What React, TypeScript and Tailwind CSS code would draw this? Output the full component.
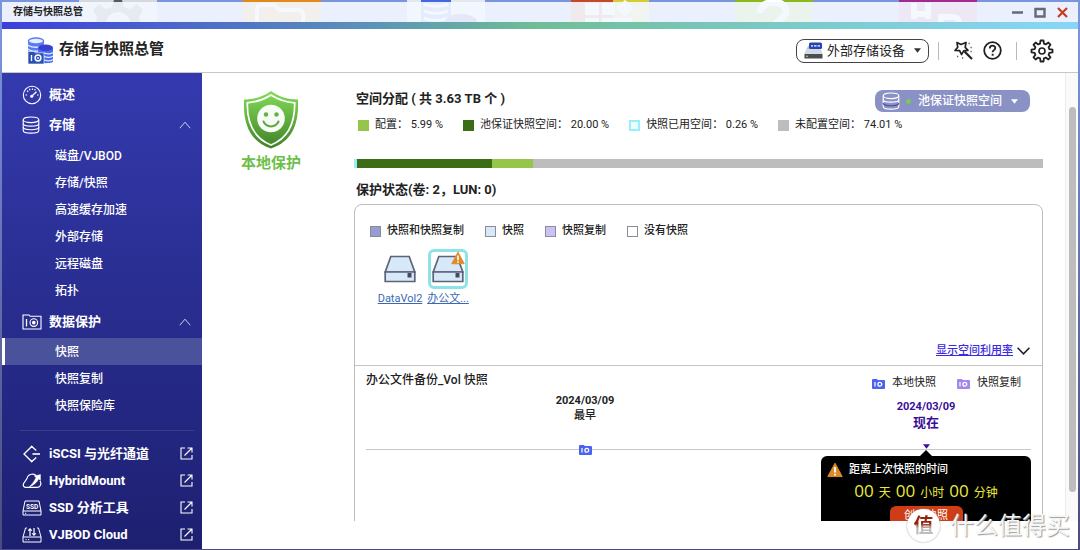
import type { ReactNode } from 'react';
import clsx from 'clsx';

const FONT = "font-[Roboto,'Noto_Sans_CJK_SC',sans-serif]";

const storageItems = ['磁盘/VJBOD', '存储/快照', '高速缓存加速', '外部存储', '远程磁盘', '拓扑'];
const protectionItems = ['快照', '快照复制', '快照保险库'];

const spaceLegend = [
    { label: '配置', value: '5.99 %', swatch: 'bg-[#95c54b]' },
    { label: '池保证快照空间', value: '20.00 %', swatch: 'bg-[#3b6e14]' },
    { label: '快照已用空间', value: '0.26 %', swatch: 'border-2 border-[#97effc] bg-[#eefbff]' },
    { label: '未配置空间', value: '74.01 %', swatch: 'bg-[#bdbdbd]' },
];

const spaceBar = [
    { width: 0.4, color: 'bg-[#97effc]' },
    { width: 19.6, color: 'bg-[#3b6e14]' },
    { width: 6, color: 'bg-[#95c54b]' },
];

const statusLegend = [
    { label: '快照和快照复制', swatch: 'bg-[#979dd2]' },
    { label: '快照', swatch: 'bg-[#d7e8fa]' },
    { label: '快照复制', swatch: 'bg-[#cbc1f7]' },
    { label: '没有快照', swatch: 'bg-white' },
];

function gearPath(c: number, outer: number, inner: number) {
    const points: string[] = [];
    for (let i = 0; i < 8; i++) {
        const steps: [number, number][] = [[-0.26, inner], [-0.14, outer], [0.14, outer], [0.26, inner]];
        steps.forEach(([offset, r]) => {
            const a = (i * Math.PI) / 4 + offset;
            points.push(`${(c + r * Math.sin(a)).toFixed(2)} ${(c - r * Math.cos(a)).toFixed(2)}`);
        });
    }
    return `M${points.join('L')}Z`;
}

/* ---------- icons ---------- */

function AppLogo() {
    return (
        <svg width="26" height="27" viewBox="0 0 26 27" aria-hidden="true">
            <path d="M1 4v14h16V4z" fill="#5878f4" />
            <path d="M1 8c3 3 13 3 16 0M1 12c3 3 13 3 16 0" fill="none" stroke="#dfe7ff" strokeWidth="1.4" />
            <ellipse cx="9" cy="4" rx="7.6" ry="3" fill="#e8eeff" stroke="#5a7cf6" strokeWidth="1.4" />
            <path d="M11 11v14c3 1.600 12 1.600 15 0V11z" fill="#4a6df0" />
            <path d="M17 16c3 1 7 1 9-.5M17 19.500c3 1 7 1 9-.5M17 23c3 1 7 1 9-.5" fill="none" stroke="#dfe7ff" strokeWidth="1.100" />
            <ellipse cx="18.500" cy="10.800" rx="7.500" ry="3.200" fill="#3a3fd0" />
            <path d="M1 14.500h6l1.500 1.300H17V27H1z" fill="#2b50b4" stroke="#fff" strokeWidth=".6" />
            <path d="M4.500 18v6" stroke="#fff" strokeWidth="1.300" />
            <circle cx="11" cy="21" r="2.900" fill="none" stroke="#fff" strokeWidth="1.500" />
            <circle cx="11" cy="21" r=".9" fill="#fff" />
        </svg>
    );
}

function ExternalDriveIcon() {
    return (
        <svg width="19" height="17" viewBox="0 0 19 17" aria-hidden="true">
            <path d="M4 4h11l3.500 8H.5z" fill="#b9c0cc" />
            <path d="M.5 12h18v4.500H.5z" fill="#4a4d52" />
            <path d="M3 7l-2 5h17l-2-5z" fill="#d4d9e2" />
            <rect x="5" y=".5" width="13" height="6.500" rx="1.500" fill="#2743b0" />
            <path d="M7 3.800h2M10 3.800h2.500M13.500 3.800h2.500" stroke="#b9c6ff" strokeWidth="1.800" />
            <circle cx="3" cy="14.300" r=".9" fill="#b7d84a" />
        </svg>
    );
}

function WandIcon() {
    return (
        <svg width="19" height="19" viewBox="0 0 19 19" fill="none" stroke="#222" strokeWidth="1.700" strokeLinejoin="round" aria-hidden="true">
            <path d="M3 1.500l4 2 5-2-.8 4.800 2.800 3-4.300.6-2.200 3.600-1.900-3.900L1 9.500l2.700-3.300z" />
            <path d="M10.500 10.500l7.500 7.500" strokeWidth="2.200" />
            <path d="M14.500 2.500h1.200M16.500 6.500h1.200M16.500 10.500h1.200M3 15.500h1.200M8 17h1.200" strokeWidth="1.300" stroke="#555" />
        </svg>
    );
}

function HelpIcon() {
    return (
        <svg width="19" height="19" viewBox="0 0 19 19" fill="none" stroke="#222" aria-hidden="true">
            <circle cx="9.500" cy="9.500" r="8.300" strokeWidth="1.800" />
            <path d="M6.800 7.400c0-3.600 5.500-3.500 5.500-.3 0 2-2.700 2-2.700 4.100" strokeWidth="1.800" />
            <path d="M8.700 12.800h1.900v1.900H8.700z" fill="#222" stroke="none" />
        </svg>
    );
}

function GearIcon() {
    return (
        <svg width="24" height="24" viewBox="0 0 24 24" fill="none" stroke="#222" strokeWidth="1.800" strokeLinejoin="round" aria-hidden="true">
            <path d={gearPath(12, 10.6, 7.6)} />
            <circle cx="12" cy="12" r="3" strokeWidth="1.600" />
        </svg>
    );
}

function GaugeIcon() {
    return (
        <svg width="20" height="20" viewBox="0 0 20 20" fill="none" stroke="#fff" aria-hidden="true">
            <circle cx="10" cy="10" r="8.700" strokeWidth="1.100" />
            <path d="M10.200 10.800l4.300-4" strokeWidth="1.400" />
            <circle cx="9.700" cy="11.200" r="1.500" fill="#fff" stroke="none" />
            <path d="M3.500 10h1.600M15 10h1.600M5 5.800l1.200 1M7.500 3.800l.5 1.400M10.500 3.500V5M13.300 4.200l-.7 1.200" strokeWidth="1.200" />
        </svg>
    );
}

function DatabaseIcon({ dark }: { dark?: boolean }) {
    return (
        <svg width="18" height="18" viewBox="0 0 18 18" fill="none" stroke="#fff" strokeWidth="1.100" aria-hidden="true">
            <ellipse cx="9" cy="3.800" rx="7.800" ry="2.800" />
            <path d="M1.200 3.800v10.600c0 3.600 15.600 3.600 15.600 0V3.800" />
            <path d="M1.200 7.400c0 3.600 15.600 3.600 15.600 0" />
            <path d="M1.200 11c0 3.600 15.600 3.600 15.600 0" stroke={dark ? '#474e94' : '#fff'} />
        </svg>
    );
}

function CameraOutlineIcon() {
    return (
        <svg width="20" height="16" viewBox="0 0 20 16" fill="none" stroke="#fff" strokeWidth="1.100" aria-hidden="true">
            <path d="M1 1h6l1.200 1.300H19V15H1z" />
            <path d="M4.500 5v7.500" strokeWidth="1.300" />
            <circle cx="11.800" cy="8.600" r="3.800" />
            <circle cx="11.800" cy="8.600" r="1.300" fill="#fff" />
        </svg>
    );
}

function CameraIcon({ color }: { color: string }) {
    return (
        <svg width="13" height="10" viewBox="0 0 13 10" aria-hidden="true">
            <path d="M1 0h4l.7 1H12a1 1 0 0 1 1 1v7a1 1 0 0 1-1 1H1a1 1 0 0 1-1-1V1a1 1 0 0 1 1-1z" fill={color} />
            <path d="M3 3v4.500" stroke="#fff" strokeWidth="1.200" />
            <circle cx="7.800" cy="5.300" r="1.900" fill="none" stroke="#fff" strokeWidth="1.300" />
        </svg>
    );
}

function IscsiIcon() {
    return (
        <svg width="20" height="18" viewBox="0 0 20 18" fill="none" stroke="#fff" strokeWidth="1.300" aria-hidden="true">
            <path d="M14.300 5.500L9.700 1.500 2 9l7.700 7.500 4.600-4" />
            <path d="M10.500 9H18" strokeWidth="1.600" />
            <circle cx="9.700" cy="1.800" r="1" fill="#fff" stroke="none" />
            <circle cx="9.700" cy="16.200" r="1" fill="#fff" stroke="none" />
        </svg>
    );
}

function HybridIcon() {
    return (
        <svg width="20" height="16" viewBox="0 0 20 16" fill="none" stroke="#fff" strokeWidth="1.200" aria-hidden="true">
            <path d="M14.500 3C12.500.2 6 .3 5 5.500L1.600 10.500C.6 13 2 14.300 4 14.300h11.500c3 0 4.300-3.800 2.500-6.300" />
            <path d="M18.500 1.500v6l-1.800-1.600c-2 3.600-4.800 6.400-9.700 8.100 3-2.800 5.400-5.700 7-9.600L12.300 3z" fill="#fff" strokeWidth=".4" />
        </svg>
    );
}

function SsdIcon() {
    return (
        <svg width="20" height="16" viewBox="0 0 20 16" fill="none" stroke="#fff" aria-hidden="true">
            <path d="M3 1h14l2 10v4H1v-4zM1 11h18" />
            <path d="M3 13.300h1.200" />
            <text x="10" y="8.500" textAnchor="middle" fontSize="6.500" fontWeight="700" fill="#fff" stroke="none">SSD</text>
        </svg>
    );
}

function VjbodIcon() {
    return (
        <svg width="20" height="16" viewBox="0 0 20 16" fill="none" stroke="#fff" aria-hidden="true">
            <path d="M5 1H3.500L1 10v5h18v-5L16.500 1H15M1 10h18" />
            <path d="M3.500 12.700h1.200M6 12.700h1.200" />
            <path d="M8 9V2M6.300 3.700L8 1.800l1.700 1.900M12 1v7M10.300 6.300L12 8.200l1.700-1.900" strokeWidth="1.200" />
        </svg>
    );
}

function OpenIcon() {
    return (
        <svg width="13" height="13" viewBox="0 0 13 13" fill="none" stroke="#fff" strokeWidth="1.100" aria-hidden="true">
            <path d="M5 1H1v11h11V8" />
            <path d="M4.500 8.500L12 1M7.500 1H12v4.500" />
        </svg>
    );
}

function ChevronUp() {
    return (
        <svg width="12" height="8" viewBox="0 0 12 8" fill="none" stroke="#cdd0ee" aria-hidden="true">
            <path d="M.8 7.200L6 1.200l5.200 6" />
        </svg>
    );
}

function Caret({ color }: { color: string }) {
    return (
        <svg width="7" height="5" viewBox="0 0 7 5" aria-hidden="true" className="pointer-events-none">
            <path d="M0 .3h7L3.500 4.800z" fill={color} />
        </svg>
    );
}

function WarningIcon({ size }: { size: number }) {
    return (
        <svg width={size} height={size} viewBox="0 0 16 16" aria-hidden="true">
            <path d="M8 1.200L15.200 14.600H.8z" fill="#dd8a2a" stroke="#dd8a2a" strokeWidth="1" strokeLinejoin="round" />
            <path d="M8 5v5.500M8 11.800v1.700" stroke="#fff" strokeWidth="1.800" />
        </svg>
    );
}

function VolumeIcon() {
    return (
        <svg width="32" height="28" viewBox="0 0 32 28" fill="#d7e8fa" stroke="#5f6377" strokeWidth="1.700" aria-hidden="true">
            <path d="M6.800 1.500h18.400L30.800 17H1.200z" />
            <path d="M1.200 17h29.600v9.500H1.200z" />
            <path d="M23.500 18h4v4.500h-4z" fill="#454a5c" stroke="none" />
        </svg>
    );
}

function ShieldIcon() {
    return (
        <svg width="56" height="59" viewBox="0 0 56 59" aria-hidden="true">
            <defs>
                <linearGradient id="shield" x1="0" y1="0" x2="0" y2="1">
                    <stop offset="0" stopColor="#83dc58" />
                    <stop offset="1" stopColor="#3f8228" />
                </linearGradient>
            </defs>
            <path d="M28 1c7 5 16 8.500 27 8.500C56 33 50 51 28 58.500 6 51 0 33 1 9.500 12 9.500 21 6 28 1z" fill="url(#shield)" />
            <path d="M28 5c7 4.500 14.500 7.200 23.700 7.800C52 33 46 48 28 55 10 48 4 33 4.300 12.800 13.500 12.200 21 9.500 28 5z" fill="none" stroke="#fff" strokeWidth="1.700" />
            <circle cx="28" cy="28.500" r="13.800" fill="#f8fcf6" />
            <circle cx="23" cy="24.500" r="2.200" fill="#62b33f" />
            <circle cx="33.500" cy="24.500" r="2.200" fill="#62b33f" />
            <path d="M20.500 31.500c3 6.500 12 6.500 15 0" fill="none" stroke="#5aa83a" strokeWidth="2" strokeLinecap="round" />
        </svg>
    );
}

/* ---------- desktop shortcuts behind the window ---------- */

function DesktopTiles() {
    return (
        <div className="absolute inset-x-0 top-0 flex h-6 gap-[86px] overflow-hidden pl-[79px]" aria-hidden="true">
            <svg width="78" height="24" viewBox="0 0 78 24" className="shrink-0">
                <path d="M0 0h78v24H0z" fill="#d6d8dc" />
                <path d="M35 0h8l2 7 6 2 7-5 6 6-4 7 2 7H16l2-7-4-7 6-6 7 5 6-2z" fill="#55585e" />
                <circle cx="39" cy="24" r="12" fill="#d6d8dc" />
            </svg>
            <svg width="78" height="24" viewBox="0 0 78 24" className="shrink-0">
                <path d="M0 0h78v24H0z" fill="#e08a1e" />
                <path d="M14 24V9q0-4 4-4h14l4 5h20q4 0 4 4v10" fill="none" stroke="#fff" strokeWidth="4" />
            </svg>
            <svg width="78" height="24" viewBox="0 0 78 24" className="shrink-0">
                <path d="M0 0h78v24H0z" fill="#e4e7ee" />
                <path d="M14 0h30v24H14z" fill="#4666e0" />
                <path d="M17 4c6 3 18 3 24 0M17 11c6 3 18 3 24 0M17 18c6 3 18 3 24 0" fill="none" stroke="#fff" strokeWidth="3" />
                <ellipse cx="54" cy="22" rx="16" ry="8" fill="#3338b8" />
            </svg>
            <svg width="78" height="24" viewBox="0 0 78 24" className="shrink-0">
                <path d="M0 0h42v24H0z" fill="#c4482c" />
                <path d="M42 0h36v24H42z" fill="#d6cc34" />
                <path d="M14 3h14v12H14zM31 3h13v12H31zM14 18h14v6H14zM31 18h30v6H31zM54 0l9 8-9 9-9-9z" fill="#fff" />
            </svg>
            <svg width="78" height="24" viewBox="0 0 78 24" className="shrink-0">
                <path d="M0 0h78v24H0z" fill="#8cb81e" />
                <path d="M25 13C25-1 51-1 51 11c0 6-6 8-10 13" fill="none" stroke="#fff" strokeWidth="7" />
            </svg>
            <svg width="78" height="24" viewBox="0 0 78 24" className="shrink-0">
                <path d="M0 0h78v24H0z" fill="#a02a92" />
                <path d="M15 3v16M29 3v16M15 14h14M42 24v-7h12q6 0 6 7" fill="none" stroke="#fff" strokeWidth="6" />
            </svg>
        </div>
    );
}

/* ---------- sidebar ---------- */

function SubItem({ label, active }: { label: string; active?: boolean }) {
    return (
        <a
            href="#"
            aria-current={active ? 'page' : undefined}
            className={clsx(
                'flex h-[27px] items-center border-l-[3px] pl-[50px] text-xs font-medium',
                active ? 'border-white bg-[#4a529b]' : 'border-transparent',
            )}
        >
            {label}
        </a>
    );
}

function GroupButton({ icon, label }: { icon: ReactNode; label: string }) {
    return (
        <button type="button" aria-expanded="true" className="flex h-[30px] w-full items-center pr-[11px] pl-5 text-left text-[13px] font-bold">
            <span className="flex w-[27px] items-center">{icon}</span>
            <span className="flex-1">{label}</span>
            <ChevronUp />
        </button>
    );
}

function ExternalLink({ icon, label }: { icon: ReactNode; label: string }) {
    return (
        <a href="#" className="flex h-[27px] items-center pr-[9px] pl-5 text-[13px] font-bold">
            <span className="flex w-[27px] items-center">{icon}</span>
            <span className="flex-1 whitespace-nowrap">{label}</span>
            <OpenIcon />
        </a>
    );
}

function Sidebar() {
    return (
        <nav className="w-[200px] shrink-0 overflow-hidden bg-linear-to-b from-[#343aae] to-[#1d2070] pt-[7px] text-white">
            <a href="#" className="flex h-[30px] items-center pl-5 text-[13px] font-bold">
                <span className="flex w-[27px] items-center">
                    <GaugeIcon />
                </span>
                概述
            </a>
            <GroupButton icon={<DatabaseIcon />} label="存储" />
            <div className="pt-0.5 pb-[3px]">
                {storageItems.map((item) => (
                    <SubItem key={item} label={item} />
                ))}
            </div>
            <GroupButton icon={<CameraOutlineIcon />} label="数据保护" />
            <div className="pt-px">
                {protectionItems.map((item, i) => (
                    <SubItem key={item} label={item} active={i === 0} />
                ))}
            </div>
            <hr className="mt-[11px] mr-2 mb-[9px] ml-[18px] border-[#3b408c]" />
            <ExternalLink icon={<IscsiIcon />} label="iSCSI 与光纤通道" />
            <ExternalLink icon={<HybridIcon />} label="HybridMount" />
            <ExternalLink icon={<SsdIcon />} label="SSD 分析工具" />
            <ExternalLink icon={<VjbodIcon />} label="VJBOD Cloud" />
        </nav>
    );
}

/* ---------- main content ---------- */

function SpaceAllocation() {
    return (
        <section>
            <div className="flex h-[22px] items-start justify-between pr-[13px] pl-0.5">
                <h2 className="text-[13px] leading-[18px] font-bold">空间分配 ( 共 3.63 TB 个 )</h2>
                <div className="flex h-[22px] items-center rounded-lg bg-[#8a91c5] pr-3 pl-[7px] text-xs font-medium text-white">
                    <DatabaseIcon dark />
                    <span className="ml-1.5 size-[5px] rounded-full bg-[#7cc858]" />
                    <select aria-label="池空间" className="ml-[7px] appearance-none bg-transparent outline-none">
                        <option>池保证快照空间</option>
                    </select>
                    <span className="ml-2">
                        <Caret color="#fff" />
                    </span>
                </div>
            </div>
            <ul className="mt-[5px] flex h-4 items-center gap-5 pl-1 text-[11px]">
                {spaceLegend.map(({ label, value, swatch }) => (
                    <li key={label} className="flex items-center gap-1.5 whitespace-nowrap">
                        <span className={clsx('size-[11px]', swatch)} />
                        {label}： {value}
                    </li>
                ))}
            </ul>
            <div className="mt-[26px] flex h-[9px] bg-[#bdbdbd]">
                {spaceBar.map(({ width, color }) => (
                    <div key={color} className={color} style={{ width: `${width}%` }} />
                ))}
            </div>
        </section>
    );
}

function Volume({ name, selected }: { name: string; selected?: boolean }) {
    return (
        <a href="#" className="flex w-[46px] flex-col items-center text-[11px] text-[#3c68b4]">
            <span className={clsx('relative flex size-10 items-center justify-center rounded-md border-[3px]', selected ? 'border-[#8ee3e8]' : 'border-transparent')}>
                <VolumeIcon />
                {selected && (
                    <span className="absolute -top-px right-0">
                        <WarningIcon size={14} />
                    </span>
                )}
            </span>
            <span className="mt-0.5 leading-4 whitespace-nowrap underline">{name}</span>
        </a>
    );
}

function Timeline() {
    return (
        <div className="px-[11px]">
            <div className="flex border-b border-[#c8c8c8]">
                <div className="flex flex-1 flex-col items-center pr-[17px] text-[11px] leading-[15px]">
                    <p className="font-bold">2024/03/09</p>
                    <p className="font-medium">最早</p>
                    <button type="button" aria-label="本地快照" className="relative top-1.5 mt-auto">
                        <CameraIcon color="#4a63f0" />
                    </button>
                </div>
                <div className="flex w-[210px] flex-col items-center pt-1.5 text-[#3a0f96]">
                    <p className="text-[11px] leading-[15px] font-bold">2024/03/09</p>
                    <p className="text-[13px] leading-[18px] font-bold">现在</p>
                    <span className="mt-3">
                        <Caret color="#3a0f96" />
                    </span>
                </div>
            </div>
            <div className="ml-auto w-[210px]">
                <div className="mx-auto size-0 border-x-[6px] border-b-[6px] border-x-transparent border-b-black" />
                <div className="flex flex-col items-center rounded-md bg-black px-1.5 pt-1.5 pb-3">
                    <p className="flex items-center gap-1.5 self-stretch text-[11px] leading-4 font-medium text-white">
                        <WarningIcon size={16} />
                        距离上次快照的时间
                    </p>
                    <p className="flex items-baseline gap-[5px] text-xs leading-[25px] text-[#eaea3c]">
                        <span className="font-['Open_Sans',sans-serif] text-[17px]">00</span>天
                        <span className="font-['Open_Sans',sans-serif] text-[17px]">00</span>小时
                        <span className="font-['Open_Sans',sans-serif] text-[17px]">00</span>分钟
                    </p>
                    <button type="button" className="h-6 w-[73px] rounded-md bg-[#cf3d16] pb-1 text-[11px] text-white">
                        创建快照
                    </button>
                </div>
            </div>
        </div>
    );
}

function ProtectionStatus() {
    return (
        <section className="mt-3">
            <h2 className="pl-0.5 text-[13px] leading-5 font-bold">保护状态(卷: 2，LUN: 0)</h2>
            <div className="mt-1 rounded-lg border border-[#bdbdbd] pb-10">
                <ul className="mt-[18px] flex h-4 items-center gap-[21px] pl-[15px] text-[11px] font-medium">
                    {statusLegend.map(({ label, swatch }) => (
                        <li key={label} className="flex items-center gap-1.5">
                            <span className={clsx('size-[11px] border border-[#8a8d94]', swatch)} />
                            {label}
                        </li>
                    ))}
                </ul>
                <div className="mt-2.5 flex h-[94px] gap-0.5 pl-[22px]">
                    <Volume name="DataVol2" />
                    <Volume name="办公文..." selected />
                </div>
                <div className="flex h-[23px] items-start justify-end border-b border-[#c4c4c4] pr-3">
                    <a href="#" className="flex items-center gap-1 text-[11px] leading-4 font-medium text-[#3a2be0]">
                        <span className="underline">显示空间利用率</span>
                        <svg width="13" height="8" viewBox="0 0 13 8" fill="none" stroke="#222" strokeWidth="1.600" aria-hidden="true">
                            <path d="M.6.8l5.900 6 5.900-6" />
                        </svg>
                    </a>
                </div>
                <div className="flex h-[27px] justify-between pr-[21px] pl-[11px]">
                    <h3 className="pt-1.5 text-xs font-medium">办公文件备份_Vol 快照</h3>
                    <div className="flex items-center gap-[21px] pt-2 text-[11px]">
                        <span className="flex items-center gap-[7px]">
                            <CameraIcon color="#4a63f0" />
                            本地快照
                        </span>
                        <span className="flex items-center gap-[7px]">
                            <CameraIcon color="#a487ee" />
                            快照复制
                        </span>
                    </div>
                </div>
                <Timeline />
            </div>
        </section>
    );
}

function Watermark() {
    return (
        <div className="pointer-events-none absolute right-2.5 bottom-2 flex items-center gap-2.5">
            <span className="flex size-[33px] items-center justify-center rounded-full bg-white shadow-[0_0_2px_#999]">
                <span className="bg-linear-to-b from-[#96230c] from-40% to-[#bdbdbd] to-60% bg-clip-text text-xl leading-6 font-bold text-transparent">值</span>
            </span>
            <span className="text-2xl leading-8 text-[#f6f6f6] [text-shadow:1px_1px_1px_#999]">什么值得买</span>
        </div>
    );
}

export default function App() {
    return (
        <div className={clsx('relative flex h-screen flex-col bg-linear-to-b from-[#7b95dc] from-5% to-[#4c4a80] px-0.5 pt-0.5 pb-px text-[#222]', FONT)}>
            <DesktopTiles />
            <div className="relative flex min-h-0 flex-1 flex-col">
                {/* title bar */}
                <div className="flex h-5 items-center bg-[#f3f7ff]/92 pr-2.5 pl-[11px]">
                    <h1 className="flex-1 text-[10px] leading-4 font-bold">存储与快照总管</h1>
                    <div className="flex items-center gap-[11px]">
                        <button type="button" aria-label="最小化">
                            <svg width="11" height="11" viewBox="0 0 11 11">
                                <path d="M0 5.500h11" stroke="#666a74" strokeWidth="2.500" />
                            </svg>
                        </button>
                        <button type="button" aria-label="最大化">
                            <svg width="12" height="11" viewBox="0 0 12 11">
                                <path d="M1.500 2h9v7.500h-9z" fill="none" stroke="#666a74" strokeWidth="2.400" />
                            </svg>
                        </button>
                        <button type="button" aria-label="关闭">
                            <svg width="11" height="11" viewBox="0 0 11 11">
                                <path d="M1 1l9 9M10 1l-9 9" stroke="#c93a22" strokeWidth="2.200" />
                            </svg>
                        </button>
                    </div>
                </div>
                <div className="h-[7px] bg-[linear-gradient(90deg,#3d3fdc_0%,#5b92b8_34%,#6fbe96_50%,#79c6bb_66%,#87d6f8_100%)]" />

                {/* application header */}
                <header className="flex h-11 items-center border-b border-[#c8c8c8] bg-white pr-6 pl-[25px]">
                    <AppLogo />
                    <p className="ml-1.5 flex-1 pb-1 text-[15px] leading-6 font-bold">存储与快照总管</p>
                    <div className="flex h-6 items-center rounded-lg border border-[#444] px-[7px] text-[13px]">
                        <ExternalDriveIcon />
                        <select aria-label="存储设备" className="ml-1 appearance-none bg-transparent outline-none">
                            <option>外部存储设备</option>
                        </select>
                        <span className="ml-2">
                            <Caret color="#333" />
                        </span>
                    </div>
                    <span className="mr-[15px] ml-[9px] h-[18px] w-px bg-[#bfb8b0]" />
                    <button type="button" aria-label="工具">
                        <WandIcon />
                    </button>
                    <button type="button" aria-label="帮助" className="ml-2.5">
                        <HelpIcon />
                    </button>
                    <span className="mr-[13px] ml-[14px] h-[18px] w-px bg-[#bfb8b0]" />
                    <button type="button" aria-label="设置">
                        <GearIcon />
                    </button>
                </header>

                <div className="flex min-h-0 flex-1 bg-white">
                    <Sidebar />
                    <div className="flex min-w-0 flex-1 pb-7">
                        <main className="flex min-w-0 flex-1 overflow-hidden pt-[17px] pr-[22px]">
                            <div className="flex w-[138px] shrink-0 flex-col items-center">
                                <ShieldIcon />
                                <p className="mt-0.5 text-[15px] leading-6 font-bold text-[#6cc04a]">本地保护</p>
                            </div>
                            <div className="min-w-0 flex-1 pl-[14px]">
                                <SpaceAllocation />
                                <ProtectionStatus />
                            </div>
                        </main>
                        <div className="flex w-[13px] flex-col items-center border-l border-[#ececec] bg-[#fafafa] pt-[34px]" aria-hidden="true">
                            <div className="h-[93%] w-[7px] rounded-full bg-[#bdbdbd]" />
                        </div>
                    </div>
                </div>
            </div>
            <Watermark />
        </div>
    );
}
